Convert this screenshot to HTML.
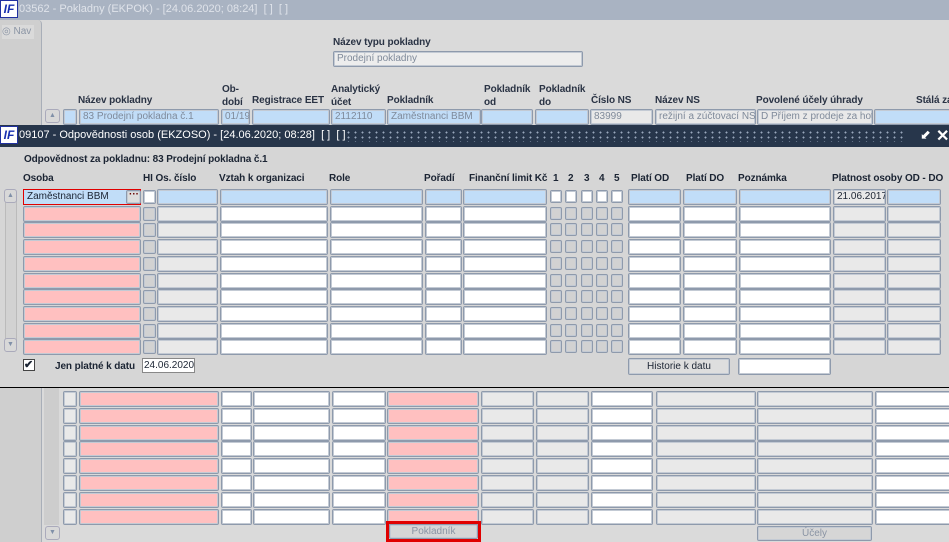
<!DOCTYPE html>
<html><head><meta charset="utf-8"><style>
*{box-sizing:border-box;margin:0;padding:0}
body{width:949px;height:542px;overflow:hidden;position:relative;background:#dadada;font-family:"Liberation Sans",sans-serif;font-size:10px;color:#1b2433}
.a{position:absolute}
.f{position:absolute;border:1px solid #8e9aac;border-radius:2px;box-shadow:inset 0 0 0 1px #c3cad4;height:16px;white-space:nowrap;overflow:hidden;padding:1px 3px;font-size:10px;line-height:12px}
.bl{background:#c1ddf8}.pk{background:#ffc0c0}.gr{background:#e9e9e9}.wh{background:#fff}.dg{background:#d2d2d2}
.l{position:absolute;font-weight:bold;font-size:10px;letter-spacing:-0.1px;line-height:13px;white-space:nowrap}
.bg .l{color:#2a3344}
.bg .f{color:#7f8a9a}
.logo{position:absolute;width:18px;height:18px;background:#fff;border:1px solid #2030a0;color:#1830b0;font:bold italic 12px "Liberation Sans",sans-serif;text-align:center;line-height:16px}
.sb{position:absolute;width:15px;height:14px;border:1px solid #aab;border-radius:3px;background:#d8d8d8;font-size:7px;color:#8090a8;text-align:center;line-height:12px}
</style></head><body>
<!-- background window -->
<div class="a" style="left:0;top:0;width:949px;height:20px;background:#a9b3c2"></div>
<div class="logo" style="left:0;top:0">IF</div>
<div class="a" style="left:19px;top:3px;color:#dfe3ea;font-size:11px;white-space:nowrap">03562 - Pokladny (EKPOK) - [24.06.2020; 08:24]&nbsp; [ ]&nbsp; [ ]</div>
<div class="a" style="left:0;top:20px;width:42px;height:522px;background:#cfcfcf;border-right:1px solid #a8aeb8;border-top-right-radius:4px"></div>
<div class="a" style="left:2px;top:25px;width:32px;height:14px;background:#dadada;color:#8a94a4;font-size:10px;white-space:nowrap;line-height:14px">◎ Nav</div>
<div class="a" style="left:44px;top:380px;width:15px;height:145px;background:#cdcdcd"></div>
<div class="bg">
<div class="l" style="left:333px;top:36px">Název typu pokladny</div>
<div class="f" style="left:333px;top:51px;width:250px;background:#ededed">Prodejní pokladny</div>
<div class="l" style="left:78px;top:94px">Název pokladny</div>
<div class="l" style="left:222px;top:83px">Ob-<br>dobí</div>
<div class="l" style="left:252px;top:94px">Registrace EET</div>
<div class="l" style="left:331px;top:83px">Analytický<br>účet</div>
<div class="l" style="left:387px;top:94px">Pokladník</div>
<div class="l" style="left:484px;top:83px">Pokladník<br>od</div>
<div class="l" style="left:539px;top:83px">Pokladník<br>do</div>
<div class="l" style="left:591px;top:94px">Číslo NS</div>
<div class="l" style="left:655px;top:94px">Název NS</div>
<div class="l" style="left:756px;top:94px">Povolené účely úhrady</div>
<div class="l" style="left:916px;top:94px">Stálá zá</div>
<div class="sb" style="left:45px;top:109px">▲</div>
<div class="f bl" style="left:63px;top:109px;width:14px"></div>
<div class="f bl" style="left:79px;top:109px;width:140px">83 Prodejní pokladna č.1</div>
<div class="f bl" style="left:221px;top:109px;width:29px">01/19</div>
<div class="f bl" style="left:252px;top:109px;width:78px"></div>
<div class="f bl" style="left:331px;top:109px;width:55px">2112110</div>
<div class="f bl" style="left:387px;top:109px;width:94px">Zaměstnanci BBM</div>
<div class="f bl" style="left:481px;top:109px;width:52px"></div>
<div class="f bl" style="left:535px;top:109px;width:54px"></div>
<div class="f gr" style="left:590px;top:109px;width:63px">83999</div>
<div class="f gr" style="left:655px;top:109px;width:101px">režijní a zúčtovací NS s</div>
<div class="f gr" style="left:757px;top:109px;width:116px">D Příjem z prodeje za hotov</div>
<div class="f bl" style="left:874px;top:109px;width:80px"></div>
<div id="bgrows"></div>
<div class="sb" style="left:45px;top:526px">▼</div>
<div class="a" style="left:386px;top:521px;width:95px;height:21px;border:3px solid #e00000"></div>
<div class="f" style="left:389px;top:524px;width:89px;height:15px;background:#d6d6d6;text-align:center;color:#8a94a4">Pokladník</div>
<div class="f" style="left:757px;top:526px;width:115px;height:15px;background:#d6d6d6;text-align:center;color:#8a94a4">Účely</div>
</div>
<!-- dialog -->
<div class="a" style="left:0;top:125px;width:949px;height:22px;background:#27364b"></div>
<div class="a" style="left:345px;top:130px;width:560px;height:12px;background-image:radial-gradient(circle,#9aa8bc 0.8px,transparent 1.1px);background-size:7px 5px"></div>
<div class="logo" style="left:0;top:126px">IF</div>
<div class="a" style="left:19px;top:129px;color:#fff;font-size:11px;white-space:nowrap">09107 - Odpovědnosti osob (EKZOSO) - [24.06.2020; 08:28]&nbsp; [ ]&nbsp; [ ]</div>
<div class="a" style="left:920px;top:127px;color:#fff;font-size:13px">⬋</div>
<div class="a" style="left:936px;top:126px;color:#fff;font-size:16px;font-weight:bold">✕</div>
<div class="a" style="left:0;top:147px;width:949px;height:241px;background:#d6d6d6;border-bottom:1px solid #000"></div>
<div class="l" style="left:24px;top:153px">Odpovědnost za pokladnu: 83 Prodejní pokladna č.1</div>
<div class="l" style="left:23px;top:172px">Osoba</div>
<div class="l" style="left:143px;top:172px">HI Os. číslo</div>
<div class="l" style="left:219px;top:172px">Vztah k organizaci</div>
<div class="l" style="left:329px;top:172px">Role</div>
<div class="l" style="left:424px;top:172px">Pořadí</div>
<div class="l" style="left:469px;top:172px">Finanční limit Kč</div>
<div class="l" style="left:553px;top:172px">1</div><div class="l" style="left:568px;top:172px">2</div><div class="l" style="left:584px;top:172px">3</div><div class="l" style="left:599px;top:172px">4</div><div class="l" style="left:614px;top:172px">5</div>
<div class="l" style="left:631px;top:172px">Platí OD</div>
<div class="l" style="left:686px;top:172px">Platí DO</div>
<div class="l" style="left:738px;top:172px">Poznámka</div>
<div class="l" style="left:832px;top:172px">Platnost osoby OD - DO</div>
<div class="a" style="left:5px;top:189px;width:12px;height:163px;background:#d2d2d2;border:1px solid #bbb;border-radius:4px"></div>
<div class="sb" style="left:4px;top:189px;width:13px">▲</div>
<div class="sb" style="left:4px;top:338px;width:13px">▼</div>
<div id="dlgrows"></div>
<div class="a" style="left:23px;top:359px;width:12px;height:12px;background:#fff;border:1px solid #444;font-size:11px;line-height:10px;font-weight:bold">✔</div>
<div class="l" style="left:55px;top:360px">Jen platné k datu</div>
<div class="a" style="left:142px;top:358px;width:53px;height:15px;background:#fff;border:1px solid #888;font-size:10px;padding-left:1px;line-height:13px">24.06.2020</div>
<div class="f" style="left:628px;top:358px;width:102px;height:17px;background:#dedede;text-align:center;font-size:10px;line-height:13px;color:#1b2433">Historie k datu</div>
<div class="f wh" style="left:738px;top:358px;width:93px;height:17px"></div>
<script>
function f(x,y,w,c,t,h){return '<div class="f '+c+'" style="left:'+x+'px;top:'+y+'px;width:'+w+'px'+(h?';height:'+h+'px':'')+'">'+(t||'')+'</div>';}
var s='';
for(var i=0;i<10;i++){var y=189+Math.round(i*16.7);
 if(i==0){s+='<div class="a bl" style="left:23px;top:'+y+'px;width:118px;height:16px;border:1px solid #e00000;padding:1px 3px;line-height:12px">Zaměstnanci BBM</div>';
  s+='<div class="f" style="left:126px;top:'+(y+1)+'px;width:15px;height:14px;background:#ddd;color:#600;font-weight:bold;line-height:8px;padding:0 2px">···</div>';}
 else s+=f(23,y,118,'pk');
 s+=f(143,y+1,13,i==0?'wh':'dg','',14);
 var b=i==0;
 s+=f(157,y,61,b?'bl':'gr');s+=f(220,y,108,b?'bl':'wh');s+=f(330,y,93,b?'bl':'wh');s+=f(425,y,37,b?'bl':'wh');s+=f(463,y,84,b?'bl':'wh');
 [550,565,581,596,611].forEach(function(x){s+=f(x,y+1,12,b?'wh':'dg','',13);});
 s+=f(628,y,53,b?'bl':'wh');s+=f(683,y,54,b?'bl':'wh');s+=f(739,y,92,b?'bl':'wh');s+=f(833,y,53,'gr',b?'21.06.2017':'');s+=f(887,y,54,b?'bl':'gr');
}
document.getElementById('dlgrows').innerHTML=s;
s='';
for(var i=0;i<8;i++){var y=391+Math.round(i*16.8);
 s+=f(63,y,14,'gr');s+=f(79,y,140,'pk');s+=f(221,y,31,'wh');s+=f(253,y,77,'wh');s+=f(332,y,54,'wh');s+=f(387,y,92,'pk');
 s+=f(481,y,53,'gr');s+=f(536,y,53,'gr');s+=f(591,y,62,'wh');s+=f(656,y,100,'gr');s+=f(757,y,116,'gr');s+=f(875,y,80,'wh');}
document.getElementById('bgrows').innerHTML=s;
</script>
</body></html>
